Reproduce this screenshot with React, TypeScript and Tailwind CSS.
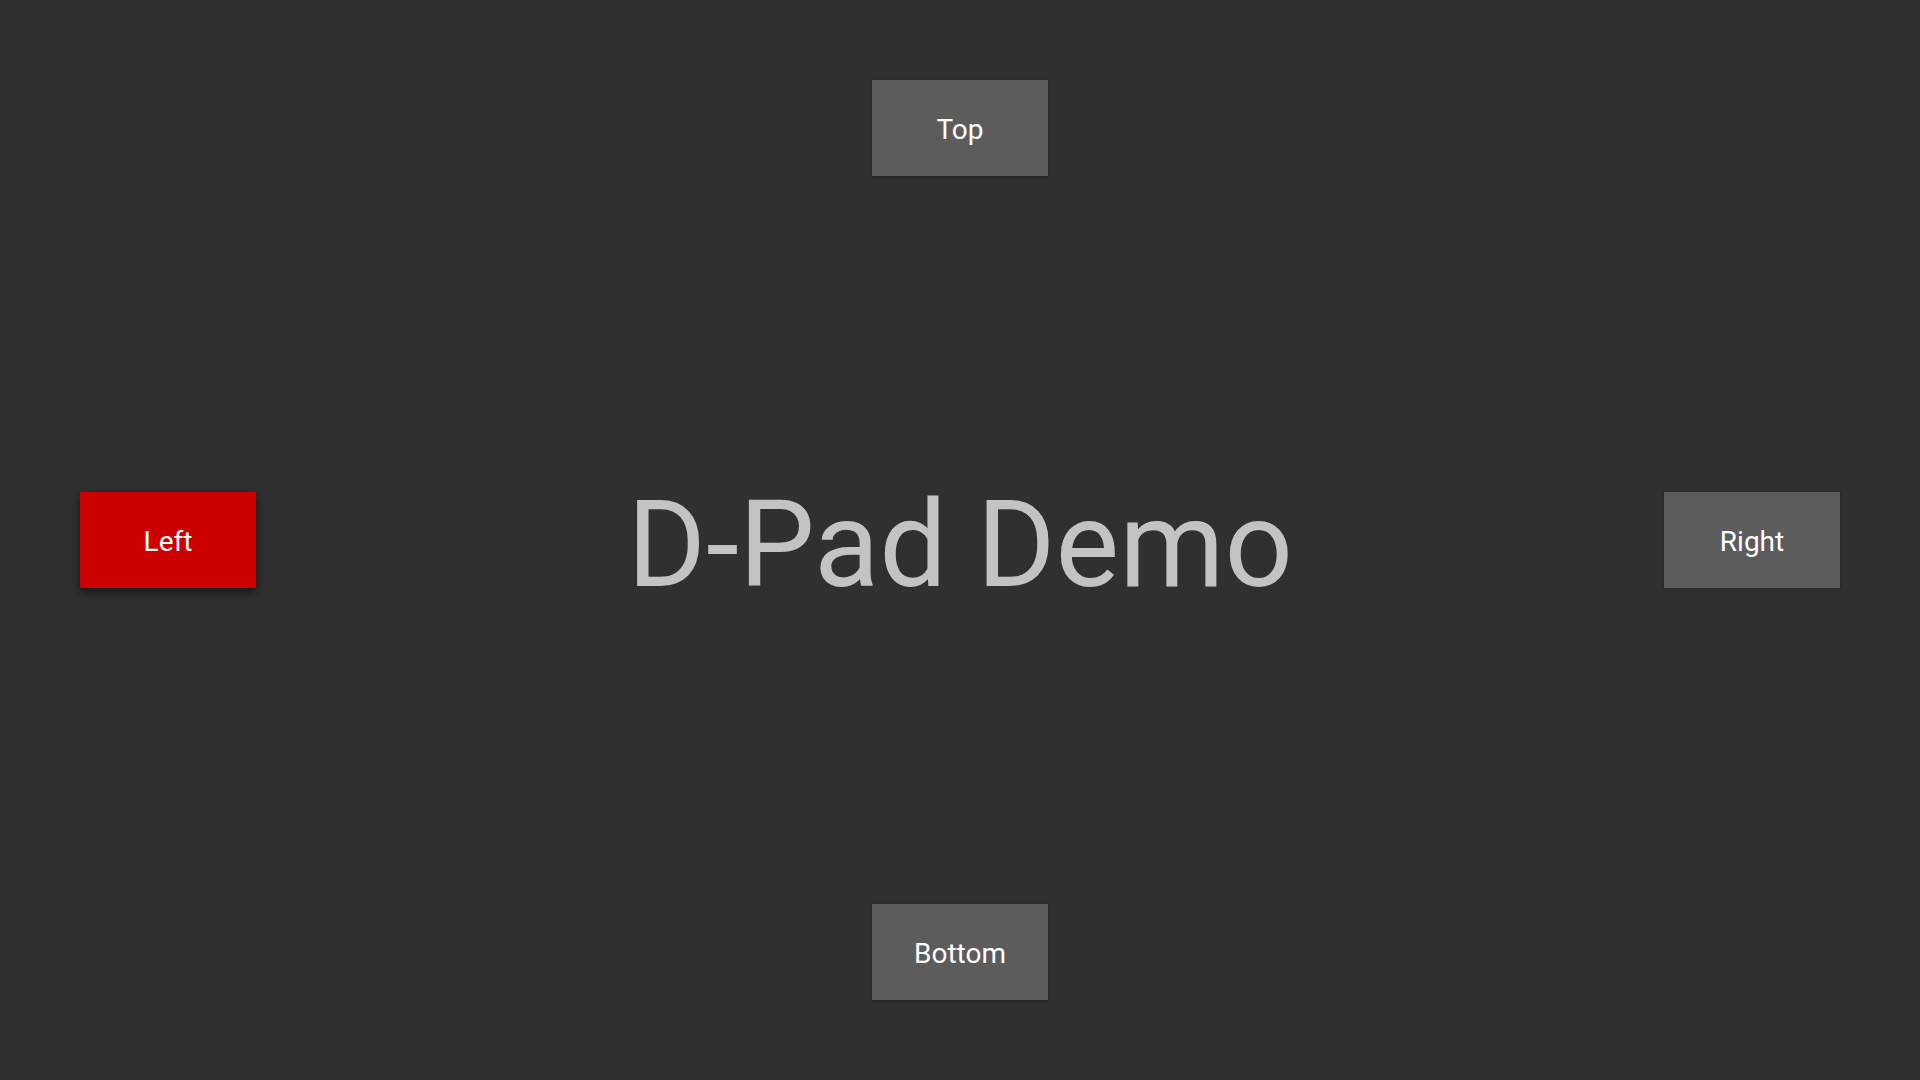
import React from "react";

function Btn({ label, focused }: { label: string; focused?: boolean }) {
  return (
    <div
      className={
        "w-[176px] h-[96px] pt-[3px] flex items-center justify-center text-white text-[28px] " +
        (focused ? "bg-[#cc0000] shadow-[0_4px_10px_rgba(0,0,0,0.6)]" : "bg-[#5c5c5c] shadow-[0_1px_3px_rgba(0,0,0,0.3)]")
      }
      style={{ fontFamily: "Roboto, sans-serif" }}
    >
      {label}
    </div>
  );
}

export default function App() {
  return (
    <div
      className="w-[1920px] h-[1080px] bg-[#303030] p-[80px] flex flex-col justify-between"
      style={{ fontFamily: "Roboto, sans-serif" }}
    >
      <div className="flex justify-center">
        <Btn label="Top" />
      </div>
      <div className="flex items-center justify-between">
        <Btn label="Left" focused />
        <div className="text-[120px] leading-none text-[#c3c3c3] mt-[10px]">D-Pad Demo</div>
        <Btn label="Right" />
      </div>
      <div className="flex justify-center">
        <Btn label="Bottom" />
      </div>
    </div>
  );
}
